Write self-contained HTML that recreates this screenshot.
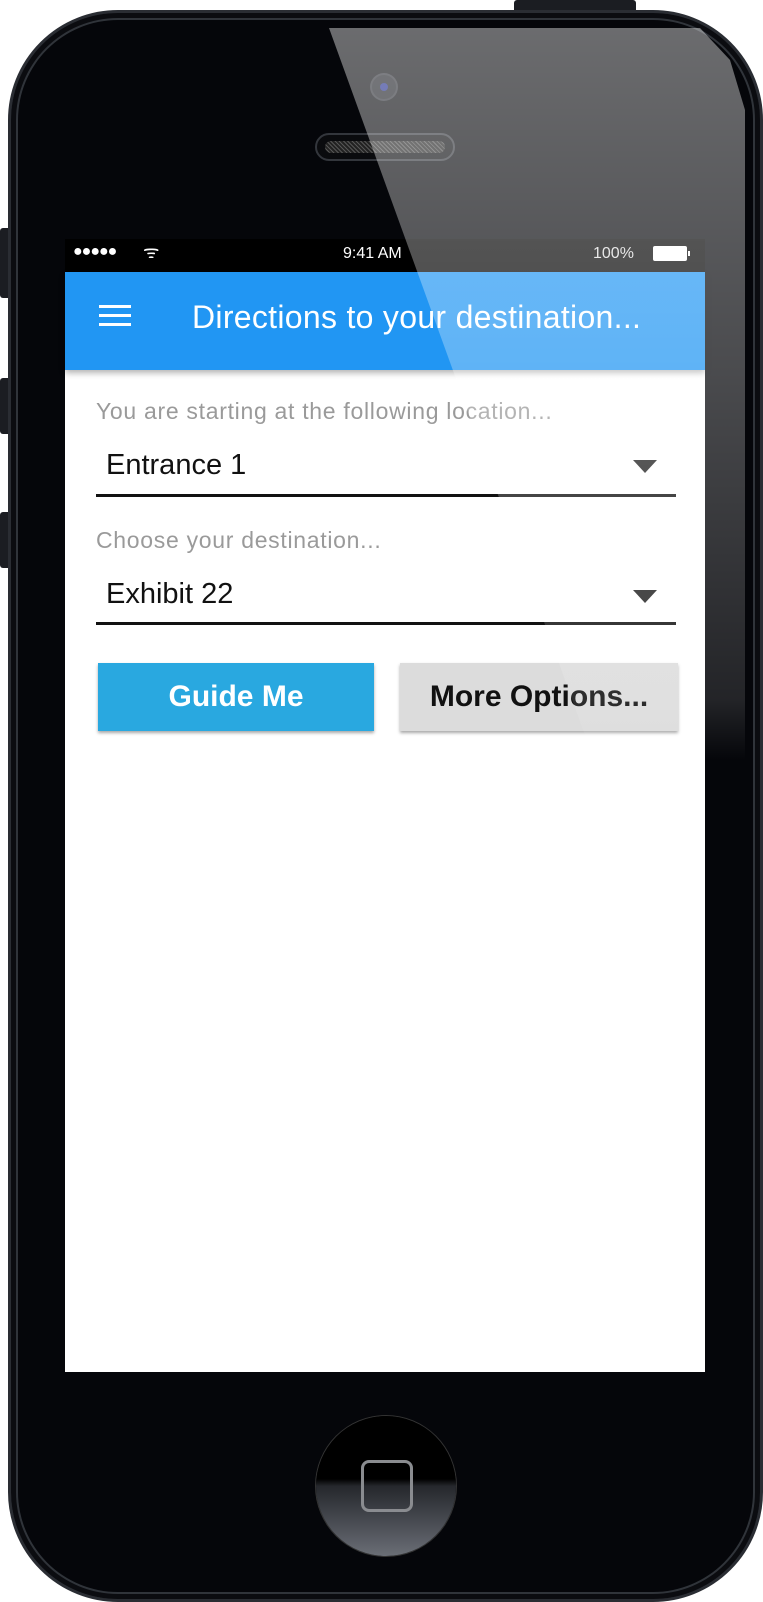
<!DOCTYPE html>
<html><head><meta charset="utf-8"><style>
*{margin:0;padding:0;box-sizing:border-box}
body{width:763px;height:1602px;background:#fff;position:relative;overflow:hidden;font-family:"Liberation Sans",sans-serif}
.abs{position:absolute}
.phone{left:8px;top:10px;width:755px;height:1592px;border-radius:110px;background:#05060a;border:3px solid #2a2d33;box-shadow:inset 0 0 0 5px #0b0c10,inset 0 0 0 7px #30343a}
.btn{background:#1b1d22;border-radius:3px}
.screen{left:65px;top:239px;width:640px;height:1133px;background:#fff}
.status{left:65px;top:239px;width:640px;height:33px;background:#000;color:#fff;font-size:16px}
.bar{left:65px;top:272px;width:640px;height:98px;background:#2196f3;box-shadow:0 3px 6px rgba(0,0,0,.3)}
.label{color:#9a9a9a;font-size:23px;left:96px;letter-spacing:0.7px}
.val{color:#111;font-size:29px;left:106px}
.line{left:96px;width:580px;height:3px;background:#111}
.tri{width:0;height:0;border-left:12px solid transparent;border-right:12px solid transparent;border-top:13px solid #222}
.b{top:663px;height:68px;font-weight:bold;font-size:30px;display:flex;align-items:center;justify-content:center;box-shadow:0 2px 3px rgba(0,0,0,.35)}
</style></head><body>
<div class="abs btn" style="left:514px;top:0;width:122px;height:14px"></div>
<div class="abs btn" style="left:0;top:228px;width:12px;height:70px"></div>
<div class="abs btn" style="left:0;top:378px;width:12px;height:56px"></div>
<div class="abs btn" style="left:0;top:512px;width:12px;height:56px"></div>
<div class="abs phone"></div>
<div class="abs" style="left:372px;top:75px;width:24px;height:24px;border-radius:50%;background:#1a1c22;box-shadow:0 0 0 2px #2a2c33"><div class="abs" style="left:8px;top:8px;width:8px;height:8px;border-radius:50%;background:#1e2a8a"></div></div>
<div class="abs" style="left:315px;top:133px;width:140px;height:28px;border-radius:14px;background:#0a0b0e;border:2px solid #33363c"><div class="abs" style="left:8px;top:6px;width:120px;height:12px;border-radius:6px;background:repeating-linear-gradient(45deg,#555 0 1px,#222 1px 3px)"></div></div>
<div class="abs screen"></div>
<div class="abs status">
<div class="abs" style="left:8px;top:4px;font-size:16px;letter-spacing:-1px">●●●●●</div>
<div class="abs" style="left:78px;top:1px;font-size:18px">ᯤ</div>
<div class="abs" style="left:278px;top:6px">9:41 AM</div>
<div class="abs" style="left:528px;top:6px;color:#ddd">100%</div>
<div class="abs" style="left:588px;top:7px;width:34px;height:15px;background:#fff;border-radius:2px"></div>
<div class="abs" style="left:623px;top:12px;width:2px;height:5px;background:#fff"></div>
</div>
<div class="abs bar">
<div class="abs" style="left:34px;top:33px;width:32px;height:3px;background:#fff;box-shadow:0 9px 0 #fff,0 18px 0 #fff"></div>
<div class="abs" style="left:127px;top:27px;color:#fff;font-size:32px;letter-spacing:0.3px">Directions to your destination...</div>
</div>
<div class="abs label" style="top:398px">You are starting at the following location...</div>
<div class="abs val" style="top:449px">Entrance 1</div>
<div class="abs tri" style="left:633px;top:460px"></div>
<div class="abs line" style="top:494px"></div>
<div class="abs label" style="top:527px">Choose your destination...</div>
<div class="abs val" style="top:578px">Exhibit 22</div>
<div class="abs tri" style="left:633px;top:590px"></div>
<div class="abs line" style="top:622px"></div>
<div class="abs b" style="left:98px;width:276px;background:#29a8e0;color:#fff">Guide Me</div>
<div class="abs b" style="left:400px;width:278px;background:#dcdcdc;color:#111">More Options...</div>
<div class="abs" style="left:316px;top:1416px;width:140px;height:140px;border-radius:50%;background:linear-gradient(#000 0 45%,#25272c 50%,#6a6e76);box-shadow:0 0 0 1px #333"><div class="abs" style="left:45px;top:44px;width:52px;height:52px;border:3px solid #8a8c90;border-radius:8px"></div></div>
<div class="abs" style="left:0;top:0;width:763px;height:760px;background:linear-gradient(rgba(255,255,255,.42),rgba(255,255,255,.28) 370px,rgba(255,255,255,.12) 700px,rgba(255,255,255,0) 760px);clip-path:polygon(329px 28px,700px 28px,730px 60px,745px 110px,745px 760px,594px 760px)"></div>
</body></html>
